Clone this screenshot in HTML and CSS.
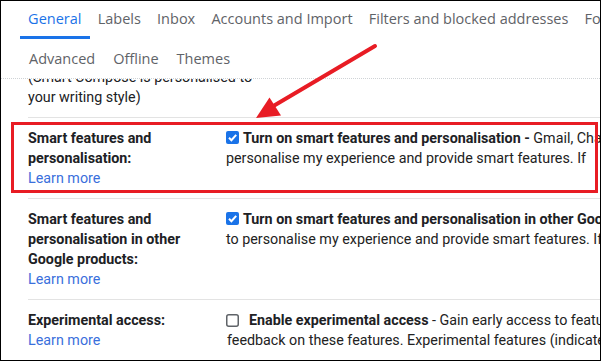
FILE: index.html
```html
<!DOCTYPE html>
<html>
<head>
<meta charset="utf-8">
<link rel="stylesheet" href="styles.css">
</head>
<body>
<div class="frame">
  <nav class="tabs">
    <div class="tab-row first">
      <span class="tab active">General</span>
      <span class="tab">Labels</span>
      <span class="tab">Inbox</span>
      <span class="tab">Accounts and Import</span>
      <span class="tab">Filters and blocked addresses</span>
      <span class="tab">Forwarding and POP/IMAP</span>
    </div>
    <div class="tab-row second">
      <span class="tab">Advanced</span>
      <span class="tab">Offline</span>
      <span class="tab">Themes</span>
    </div>
  </nav>
  <div class="content">
    <div class="scroll">
      <div class="row compose">
        <div class="label plain">(Smart Compose is personalised to<br>your writing style)</div>
      </div>
      <div class="row">
        <div class="label"><b>Smart features and<br>personalisation:</b><br><a class="link">Learn more</a></div>
        <div class="value">
          <div class="line"><span class="cb checked"><svg viewBox="0 0 13 13" width="13" height="13"><rect x="0" y="0" width="13" height="13" rx="2" fill="#1a73e8"/><path d="M3 6.8 L5.4 9.2 L10.2 3.8" fill="none" stroke="#fff" stroke-width="2"/></svg></span><b>Turn on smart features and personalisation -</b> Gmail, Chat and Meet may use my email, chat and video content to</div>
          <div class="line">personalise my experience and provide smart features. If</div>
        </div>
      </div>
      <div class="row">
        <div class="label"><b>Smart features and<br>personalisation in other<br>Google products:</b><br><a class="link">Learn more</a></div>
        <div class="value">
          <div class="line"><span class="cb checked"><svg viewBox="0 0 13 13" width="13" height="13"><rect x="0" y="0" width="13" height="13" rx="2" fill="#1a73e8"/><path d="M3 6.8 L5.4 9.2 L10.2 3.8" fill="none" stroke="#fff" stroke-width="2"/></svg></span><b>Turn on smart features and personalisation in other Google products</b></div>
          <div class="line">to personalise my experience and provide smart features. If I turn this off</div>
        </div>
      </div>
      <div class="row">
        <div class="label"><b>Experimental access:</b><br><a class="link">Learn more</a></div>
        <div class="value">
          <div class="line"><span class="cb empty"><svg viewBox="0 0 13 13" width="13" height="13"><rect x="0.75" y="0.75" width="11.5" height="11.5" rx="2" fill="#fff" stroke="#5f6368" stroke-width="1.5"/></svg></span><b>Enable experimental access</b> - Gain early access to features still in development and provide</div>
          <div class="line indent">feedback on these features. Experimental features (indicated by the flask icon)</div>
        </div>
      </div>
    </div>
  </div>
  <div class="highlight"></div>
  <svg class="arrow" viewBox="0 0 601 361" width="601" height="361">
    <line x1="375" y1="46" x2="270" y2="108" stroke="#e81c24" stroke-width="4" stroke-linecap="round"/>
    <polygon points="256,118 269.5,97.5 281,115.5" fill="#e81c24"/>
  </svg>
</div>
</body>
</html>
```

FILE: styles.css
```css
html, body {
  margin: 0;
  padding: 0;
  background: #fff;
}

.frame {
  position: relative;
  width: 601px;
  height: 361px;
  box-sizing: border-box;
  border: 1px solid #000;
  overflow: hidden;
  background: #fff;
  font-family: Roboto, "Liberation Sans", sans-serif;
  color: #222;
}

.tabs {
  padding-left: 19px;
}

.tab-row {
  display: flex;
  white-space: nowrap;
}

.tab-row.first {
  height: 38px;
}

.tab-row.second {
  height: 39px;
  align-items: center;
}

.tab {
  font-family: "Open Sans", Roboto, sans-serif;
  font-size: 14.5px;
  color: #5f6368;
  padding: 0 8.1px;
  display: flex;
  align-items: center;
  box-sizing: border-box;
  border-bottom: 3px solid transparent;
}

.tab-row.second .tab {
  border-bottom: 0;
  padding: 0 9px;
}

.tab.active {
  color: #1a73e8;
  border-bottom-color: #1a73e8;
}

.content {
  border-top: 1px dotted #cfd3d6;
  height: 282px;
  overflow: hidden;
}

.scroll {
  margin-top: -12px;
}

.row {
  display: flex;
  margin-left: 27px;
  padding: 10px 0;
  border-bottom: 1px solid #e3e3e3;
  font-size: 14.3px;
  line-height: 20px;
}

.row.compose {
  padding-top: 0;
}

.label {
  width: 198px;
  flex: none;
  white-space: nowrap;
  color: #202124;
}

.label b {
  font-weight: 700;
}

.link {
  color: #3a6fdc;
}

.value {
  flex: none;
  white-space: nowrap;
  color: #222;
}

.value b {
  font-weight: 700;
  color: #202124;
}

.line {
  height: 20px;
}

.cb {
  display: inline-block;
  width: 13px;
  height: 13px;
  vertical-align: -1px;
  margin-right: 4px;
}

.cb svg {
  display: block;
}

.cb.empty {
  margin-right: 10px;
  vertical-align: -2px;
}

.line.indent {
  padding-left: 1px;
}

.highlight {
  position: absolute;
  left: 10px;
  top: 121px;
  width: 587px;
  height: 71px;
  box-sizing: border-box;
  border: 3px solid #e81c24;
}

.arrow {
  position: absolute;
  left: -1px;
  top: -1px;
  pointer-events: none;
}
```
